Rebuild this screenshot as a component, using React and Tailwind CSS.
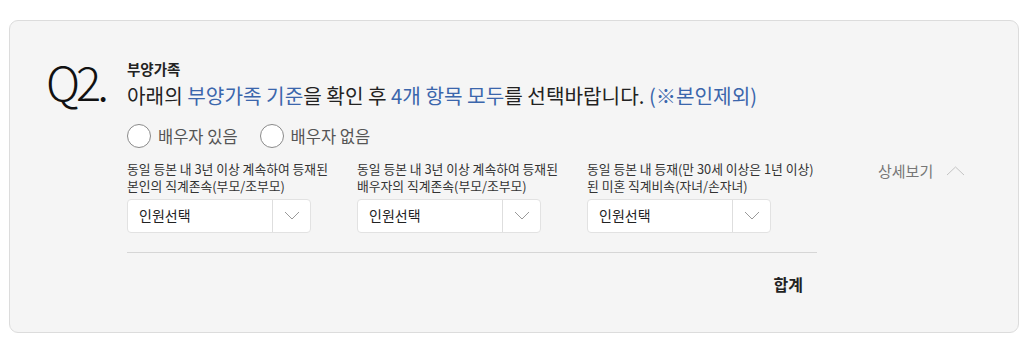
import React from "react";

const font = { fontFamily: '"Noto Sans CJK KR", "Noto Sans", sans-serif' };

// Dropdown box with a divider and a thin chevron
function PersonSelect() {
  return (
    <div className="mt-[5px] flex h-[34px] w-[184px] items-center rounded-[4px] border border-[#e2e2e2] bg-white">
      <span className="flex-1 pl-[11px] text-[14px] text-[#222]">인원선택</span>
      <span className="flex h-full w-[38px] items-center justify-center border-l border-[#dedede]">
        <svg width="16" height="9" viewBox="0 0 16 9" fill="none">
          <path d="M1 1l7 7 7-7" stroke="#9a9a9a" strokeWidth="1" />
        </svg>
      </span>
    </div>
  );
}

function Radio({ label }) {
  return (
    <label className="flex items-center gap-[7px]">
      <span className="h-[24px] w-[24px] rounded-full border border-[#8a8a8a] bg-white" />
      <span className="text-[16.5px] text-[#555]">{label}</span>
    </label>
  );
}

export default function App() {
  // Three selection columns with their two-line labels
  const columns = [
    ["동일 등본 내 3년 이상 계속하여 등재된", "본인의 직계존속(부모/조부모)"],
    ["동일 등본 내 3년 이상 계속하여 등재된", "배우자의 직계존속(부모/조부모)"],
    ["동일 등본 내 등재(만 30세 이상은 1년 이상)", "된 미혼 직계비속(자녀/손자녀)"],
  ];

  return (
    <div className="min-h-screen bg-white pl-[9px] pt-[20px]" style={font}>
      <div className="flex h-[313px] w-[1010px] rounded-[9px] border border-[#dcdcdc] bg-[#f5f5f5] pl-[36px] pt-[38px]">
        {/* Question number */}
        <div className="w-[81px] text-[47px] font-light leading-none tracking-[-4px] text-[#111] -mt-[2px]">
          Q2.
        </div>

        <div className="flex-1">
          <div className="text-[14.5px] font-bold leading-[19px] text-[#222]">부양가족</div>
          <div className="mt-[5px] text-[20.2px] leading-[26px] text-[#222]">
            아래의 <span className="text-[#3b66ac]">부양가족 기준</span>을 확인 후{" "}
            <span className="text-[#3b66ac]">4개 항목 모두</span>를 선택바랍니다.{" "}
            <span className="text-[#3b66ac]">(※본인제외)</span>
          </div>

          {/* Spouse radios */}
          <div className="mt-[15px] flex items-center gap-[22px]">
            <Radio label="배우자 있음" />
            <Radio label="배우자 없음" />
          </div>

          <div className="mt-[11px] flex">
            <div className="w-[690px]">
              <div className="grid grid-cols-3">
                {columns.map((lines, index) => (
                  <div key={index}>
                    <div className="whitespace-nowrap text-[12.8px] leading-[17px] text-[#333]">
                      {lines[0]}
                      <br />
                      {lines[1]}
                    </div>
                    <PersonSelect />
                  </div>
                ))}
              </div>
              <div className="mt-[19px] border-t border-[#d6d6d6]" />
              <div className="mt-[19px] pr-[14px] text-right text-[16px] font-bold text-[#222]">합계</div>
            </div>

            {/* Detail toggle */}
            <div className="ml-[61px] flex items-start gap-[13px]">
              <span className="text-[15px] text-[#777]">상세보기</span>
              <svg width="19" height="10" viewBox="0 0 19 10" fill="none" className="mt-[6px]">
                <path d="M1 9l8.5-8 8.5 8" stroke="#c4c4c4" strokeWidth="1" />
              </svg>
            </div>
          </div>
        </div>
      </div>
    </div>
  );
}
